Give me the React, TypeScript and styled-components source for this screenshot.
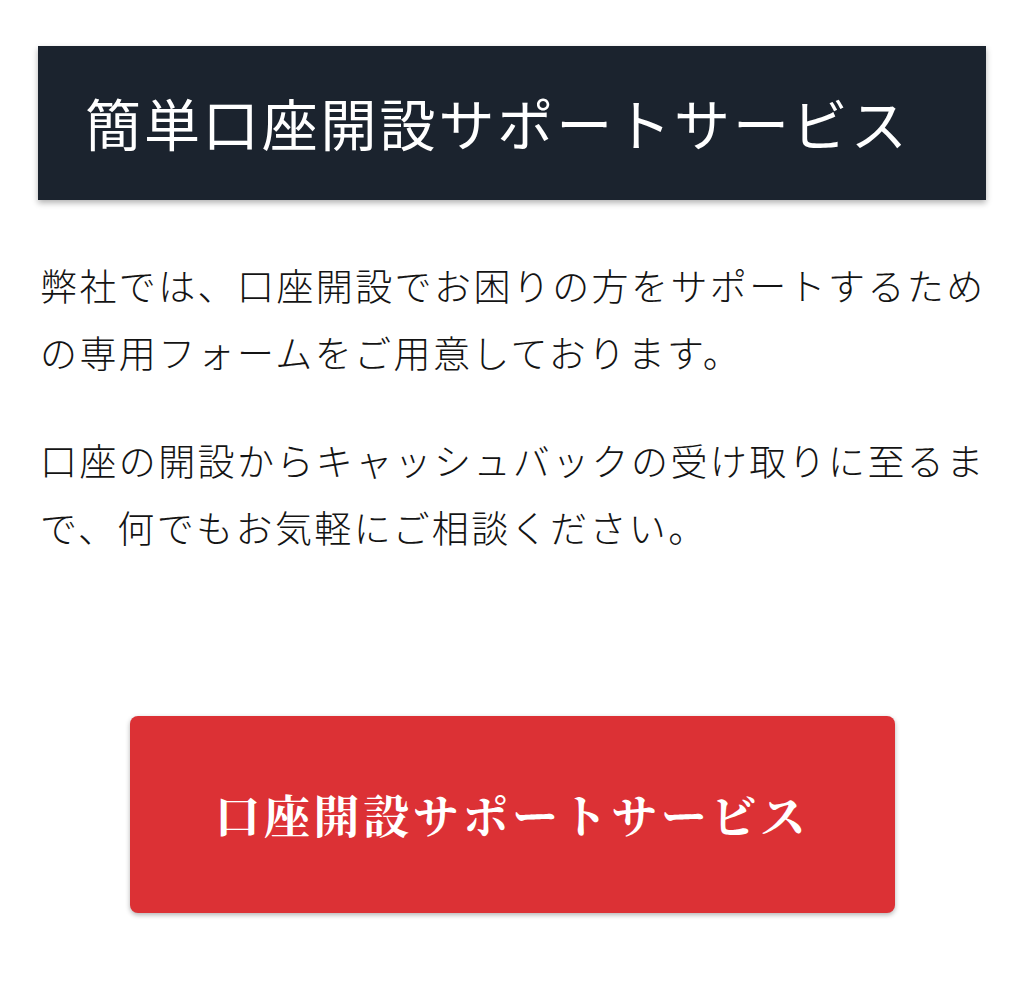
import styled, { createGlobalStyle } from "styled-components";

const GlobalStyle = createGlobalStyle`
  html, body {
    margin: 0;
    padding: 0;
    background: #ffffff;
  }
  body {
    font-family: "Noto Sans CJK JP", "Noto Sans", sans-serif;
    color: #1e1e1e;
  }
`;

const Page = styled.div`
  padding: 46px 38px 60px;
  display: flex;
  flex-direction: column;
`;

const Heading = styled.h1`
  margin: 0;
  height: 154px;
  display: flex;
  align-items: center;
  padding: 0 0 4px 47px;
  box-sizing: border-box;
  background: #1b232e;
  color: #ffffff;
  font-size: 56px;
  font-weight: 400;
  letter-spacing: 2.9px;
  box-shadow: 0 3px 6px rgba(0, 0, 0, 0.3);
`;

const Body = styled.div`
  margin-top: 52px;
  padding-left: 2px;
  display: flex;
  flex-direction: column;
  gap: 41px;
`;

const Paragraph = styled.p`
  margin: 0;
  font-size: 37px;
  line-height: 67px;
  letter-spacing: 2.4px;
  font-weight: 300;
  color: #141414;
`;

const ButtonRow = styled.div`
  margin-top: 155px;
  display: flex;
  justify-content: center;
`;

const SupportButton = styled.button`
  width: 765px;
  height: 197px;
  border: none;
  border-radius: 8px;
  background: #dc3135;
  color: #ffffff;
  font-family: "Noto Serif CJK JP", "Noto Sans CJK JP", serif;
  font-size: 46px;
  font-weight: 700;
  letter-spacing: 3.6px;
  padding: 0 0 4px;
  cursor: pointer;
  box-shadow: 0 2px 5px rgba(0, 0, 0, 0.3);
`;

export default function App() {
  return (
    <>
      <GlobalStyle />
      <Page>
        <Heading>簡単口座開設サポートサービス</Heading>
        <Body>
          <Paragraph>
            弊社では、口座開設でお困りの方をサポートするための専用フォームをご用意しております。
          </Paragraph>
          <Paragraph>
            口座の開設からキャッシュバックの受け取りに至るまで、何でもお気軽にご相談ください。
          </Paragraph>
        </Body>
        <ButtonRow>
          <SupportButton>口座開設サポートサービス</SupportButton>
        </ButtonRow>
      </Page>
    </>
  );
}
